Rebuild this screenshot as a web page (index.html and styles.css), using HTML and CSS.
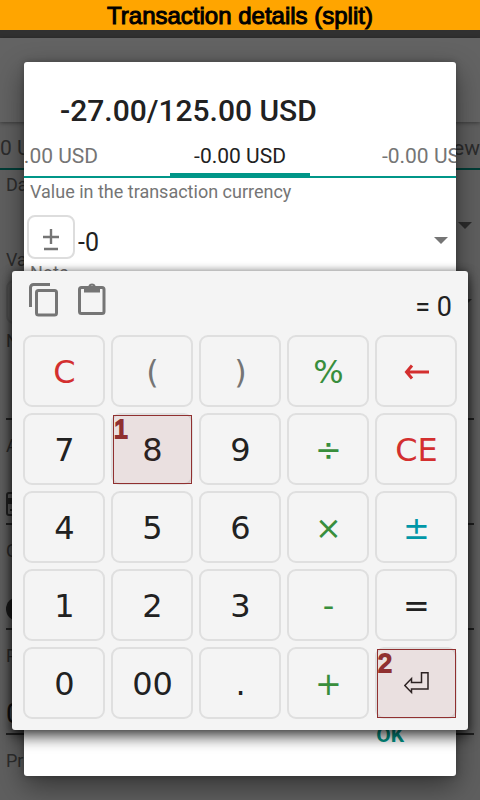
FILE: index.html
```html
<!DOCTYPE html>
<html lang="en">
<head>
<meta charset="utf-8">
<meta name="viewport" content="width=device-width, initial-scale=1">
<title>Transaction details (split)</title>
<link rel="stylesheet" href="styles.css">
</head>
<body>
<h1 class="banner">Transaction details (split)</h1>
<div class="screen">
  <div class="backdrop" aria-hidden="true">
    <div class="status-bar"></div>
    <div class="toolbar"></div>
    <div class="back-tabs"><span>0 U</span><span>New</span></div>
    <div class="back-row row-date"><span>Da</span><i class="caret"></i></div>
    <div class="back-row row-value"><span>Va</span></div>
    <div class="back-row row-sign"><i class="sign-box"></i><i class="caret"></i></div>
    <div class="back-row row-note"><span>N</span></div>
    <div class="back-row row-label"><span>A</span></div>
    <div class="back-row row-icon">
      <svg width="24" height="24" viewBox="0 0 24 24"><path fill="none" stroke="#222" stroke-width="2" d="M3 1h18a2 2 0 0 1 2 2v18a2 2 0 0 1-2 2H3a2 2 0 0 1-2-2V3a2 2 0 0 1 2-2z"/><path fill="#222" d="M2 6h20v6H2zM4 17h3v2H4z"/></svg>
    </div>
    <div class="back-row row-label"><span>C</span></div>
    <div class="back-row row-icon">
      <svg width="24" height="24" viewBox="0 0 24 24"><circle cx="12" cy="12" r="12" fill="#1c1c1c"/><circle cx="9" cy="12" r="3" fill="#5a5a5a"/></svg>
    </div>
    <div class="back-row row-label"><span>P</span></div>
    <div class="back-row row-icon"><b>0</b></div>
    <div class="back-row row-label"><span>Pr</span></div>
  </div>

  <section class="dialog" aria-label="Split entry">
    <h2 class="dialog-title">-27.00/125.00 USD</h2>
    <nav class="tabs">
      <button type="button" class="tab">-0.00 USD</button>
      <button type="button" class="tab tab-active">-0.00 USD</button>
      <button type="button" class="tab">-0.00 USD</button>
    </nav>
    <div class="form">
      <label class="field-label" for="amount">Value in the transaction currency</label>
      <div class="amount-row">
        <button type="button" class="sign-btn" aria-label="Change sign">
          <svg width="18" height="24" viewBox="0 0 18 24"><path fill="none" stroke="#757575" stroke-width="2.400" d="M1 10h16M9 2v15M2 22h14"/></svg>
        </button>
        <input id="amount" class="amount" type="text" value="-0">
        <i class="caret"></i>
      </div>
      <span class="field-label">Note</span>
    </div>
    <footer class="dialog-foot"><button type="button" class="ok">OK</button></footer>
  </section>

  <section class="calc" aria-label="Calculator">
    <header class="calc-head">
      <button type="button" class="icon-btn" aria-label="Copy">
        <svg width="34" height="36" viewBox="0 0 34 36"><path fill="none" stroke="#757575" stroke-width="3" d="M23 2.500H6.500a3 3 0 0 0-3 3V25"/><rect x="9.500" y="8.500" width="20" height="24.500" rx="2" fill="none" stroke="#757575" stroke-width="3"/></svg>
      </button>
      <button type="button" class="icon-btn" aria-label="Paste">
        <svg width="34" height="36" viewBox="0 0 34 36"><rect x="4.500" y="5.500" width="24.500" height="26" rx="2" fill="none" stroke="#757575" stroke-width="3"/><path fill="#757575" fill-rule="evenodd" d="M9 4h4.300a4 4 0 0 1 7.400 0H25v6.500H9zM17 3.500a1.600 1.600 0 1 0 0 3.200a1.600 1.600 0 1 0 0-3.200z"/></svg>
      </button>
      <output class="result">= 0</output>
    </header>
    <div class="keys">
      <button type="button" class="key red">C</button>
      <button type="button" class="key gray">(</button>
      <button type="button" class="key gray">)</button>
      <button type="button" class="key green">%</button>
      <button type="button" class="key red" aria-label="Backspace"><svg width="26" height="18" viewBox="0 0 26 18"><path fill="none" stroke="#d32f2f" stroke-width="3" d="M25 9H3M8 2.500L2.500 9L8 15.500"/></svg></button>
      <button type="button" class="key">7</button>
      <button type="button" class="key">8<span class="mark">1</span></button>
      <button type="button" class="key">9</button>
      <button type="button" class="key green">÷</button>
      <button type="button" class="key red">CE</button>
      <button type="button" class="key">4</button>
      <button type="button" class="key">5</button>
      <button type="button" class="key">6</button>
      <button type="button" class="key green">×</button>
      <button type="button" class="key cyan">±</button>
      <button type="button" class="key">1</button>
      <button type="button" class="key">2</button>
      <button type="button" class="key">3</button>
      <button type="button" class="key green">-</button>
      <button type="button" class="key">=</button>
      <button type="button" class="key">0</button>
      <button type="button" class="key">00</button>
      <button type="button" class="key">.</button>
      <button type="button" class="key green">+</button>
      <button type="button" class="key" aria-label="Enter"><svg width="26" height="24" viewBox="0 0 26 24"><path fill="none" stroke="#212121" stroke-width="1.500" d="M17.500 0.800H24V17H7.500v3.500L0.800 13.500l6.700-7v4h10z"/></svg><span class="mark">2</span></button>
    </div>
  </section>
</div>
</body>
</html>
```
FILE: styles.css
```css
* { box-sizing: border-box; }
body {
  margin: 0;
  min-height: 100vh;
  display: flex;
  flex-direction: column;
  font-family: Roboto, sans-serif;
  color: #212121;
  background: #5f5f5f;
}
button, input {
  font: inherit;
  color: inherit;
  border: 0;
  padding: 0;
  margin: 0;
  background: none;
}
.banner {
  margin: 0;
  height: 30px;
  background: #ffa500;
  color: #000;
  font: 400 24px/32px "Liberation Sans", sans-serif;
  -webkit-text-stroke: 1px #000;
  text-align: center;
}
.screen {
  flex: 1;
  position: relative;
  overflow: hidden;
}

/* Dimmed form behind the dialog */
.backdrop { color: #2c2c2c; font-size: 18px; }
.status-bar { height: 8px; background: #303030; }
.toolbar {
  height: 84px;
  background: #636363;
  box-shadow: 0 1px 4px rgba(0, 0, 0, .4);
}
.back-tabs {
  display: flex;
  justify-content: space-between;
  align-items: center;
  height: 48px;
  padding-top: 6px;
  border-bottom: 2px solid #003d37;
  font-size: 21px;
}
.back-row {
  display: flex;
  align-items: center;
  justify-content: space-between;
  margin: 0 6px;
}
.row-date { height: 74px; align-items: flex-start; padding-top: 4px; }
.row-value { height: 30px; }
.row-sign { height: 56px; }
.row-note { height: 90px; border-bottom: 2px solid #222; align-items: flex-start; }
.row-label { height: 50px; }
.row-icon { height: 55px; padding-top: 14px; border-bottom: 2px solid #222; }
.row-icon b { font-size: 28px; font-weight: 400; color: #111; }
.backdrop .caret { margin-right: 2px; }
.row-date .caret { margin-top: 48px; }
.sign-box { width: 48px; height: 44px; border: 2px solid #555; border-radius: 8px; }
.caret {
  border: 7px solid transparent;
  border-top-color: currentColor;
  border-bottom: 0;
}

.dialog {
  position: absolute;
  inset: 32px 24px 24px;
  display: flex;
  flex-direction: column;
  background: #fff;
  border-radius: 3px;
  box-shadow: 0 10px 28px rgba(0, 0, 0, .45), 0 0 6px rgba(0, 0, 0, .25);
  overflow: hidden;
}
.dialog-title {
  margin: 0;
  padding: 31px 36px 5px;
  font-size: 30px;
  line-height: 36px;
  font-weight: 500;
}
.tabs {
  display: flex;
  justify-content: center;
  gap: 48px;
  height: 44px;
  border-bottom: 2px solid #009688;
}
.tab {
  flex: none;
  padding: 2px 24px 0;
  font-size: 21px;
  line-height: 24px;
  color: #757575;
  border-top: 3px solid transparent;
  border-bottom: 3px solid transparent;
}
.tab-active { color: #212121; border-bottom-color: #009688; }
.form { flex: 1; padding: 3px 3px 0; }
.field-label {
  display: block;
  padding-left: 3px;
  font-size: 18px;
  line-height: 22px;
  color: #757575;
}
.amount-row { display: flex; align-items: center; gap: 3px; padding: 12px 5px 3px 0; }
.sign-btn {
  display: grid;
  place-items: center;
  width: 48px;
  height: 44px;
  padding-top: 4px;
  border: 2px solid #ddd;
  border-radius: 8px;
}
.amount {
  flex: 1;
  min-width: 0;
  height: 44px;
  padding-top: 10px;
  font-size: 25px;
}
.amount-row .caret { color: #757575; margin-top: 6px; }
.dialog-foot { display: flex; justify-content: flex-end; padding: 0 52px 27px; }
.ok { font-size: 21px; line-height: 28px; font-weight: 700; color: #009688; }

.calc {
  position: absolute;
  inset: 241px 12px auto;
  padding: 0 11px 11px;
  background: #f4f4f4;
  border-radius: 3px;
  box-shadow: 0 8px 14px rgba(0, 0, 0, .6), 0 0 8px rgba(0, 0, 0, .45);
}
.calc-head { display: flex; align-items: flex-start; gap: 14px; height: 64px; padding: 11px 5px 0 4px; }
.icon-btn { display: block; height: 36px; }
.icon-btn svg { display: block; }
.result { margin-left: auto; padding-top: 8px; font-size: 27px; line-height: 34px; }
.keys {
  display: grid;
  grid-template-columns: repeat(5, 1fr);
  grid-auto-rows: 72px;
  gap: 6px;
}
.key {
  position: relative;
  display: grid;
  place-items: center;
  padding: 1px 0 0 1px;
  border: 2px solid #dfdfdf;
  border-radius: 9px;
  font: 32px/40px "DejaVu Sans", sans-serif;
}
.gray { color: #757575; }
.red { color: #d32f2f; }
.green { color: #388e3c; }
.cyan { color: #0097a7; }

/* Numbered step marker laid over a key */
.mark {
  position: absolute;
  inset: 0 -1px -1px 0;
  border: 1px solid #903030;
  background: rgba(144, 48, 48, .1);
  color: #903030;
  text-align: left;
  font: 400 25px/27px "Liberation Sans", sans-serif;
  -webkit-text-stroke: 2px #903030;
}
```
